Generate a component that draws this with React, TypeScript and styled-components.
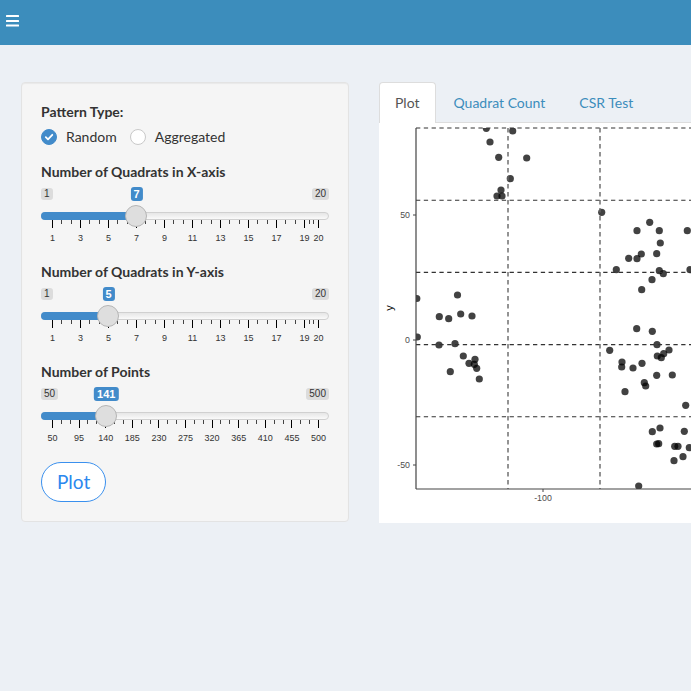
import React from 'react';
import styled, { createGlobalStyle } from 'styled-components';

const GlobalStyle = createGlobalStyle`
  html, body {
    margin: 0;
    padding: 0;
    overflow: hidden;
    background: #ecf0f5;
  }
  body {
    min-height: 100vh;
    font-family: Lato, "Open Sans", sans-serif;
    color: #333;
  }
`;

const Page = styled.div`
  min-height: 100vh;
  background: #ecf0f5;
`;

const HeaderBar = styled.header`
  height: 45px;
  background: #3c8dbc;
  display: flex;
  align-items: flex-start;
  padding: 15px 0 0 6px;
  box-sizing: border-box;
`;

const Content = styled.div`
  display: flex;
  align-items: flex-start;
  gap: 30px;
  width: 100%;
  box-sizing: border-box;
  padding: 37px 0 0 21px;
`;

const Well = styled.div`
  flex: 0 0 328px;
  box-sizing: border-box;
  padding: 19px;
  background: #f5f5f5;
  border: 1px solid #e3e3e3;
  border-radius: 4px;
  box-shadow: inset 0 1px 1px rgba(0, 0, 0, 0.05);
`;

const FormGroup = styled.div`
  margin-bottom: 15px;
`;

const FieldLabel = styled.div<{ $gap?: number }>`
  font-weight: 700;
  font-size: 14px;
  line-height: 20px;
  color: #333;
  margin-bottom: ${p => p.$gap ?? 0}px;
`;

const RadioRow = styled.div`
  display: flex;
  align-items: center;
  height: 20px;
  gap: 13px;
`;

const RadioOption = styled.label`
  display: flex;
  align-items: center;
  gap: 9px;
  font-size: 14px;
  line-height: 20px;
  color: #333;
`;

const RadioDot = styled.span<{ $checked?: boolean }>`
  width: 16px;
  height: 16px;
  box-sizing: border-box;
  border-radius: 50%;
  display: flex;
  align-items: center;
  justify-content: center;
  background: ${p => (p.$checked ? '#428bca' : '#fff')};
  border: 1px solid ${p => (p.$checked ? '#428bca' : '#c9c9c9')};
`;

const SliderBox = styled.div`
  position: relative;
  width: 288px;
  height: 65px;
`;

const EdgeBadge = styled.span<{ $side: 'left' | 'right' }>`
  position: absolute;
  top: 6px;
  ${p => p.$side}: 0;
  font-family: "Liberation Sans", Arial, sans-serif;
  font-size: 10px;
  line-height: 12px;
  padding: 0 3px;
  border-radius: 3px;
  background: rgba(0, 0, 0, 0.1);
  color: #333;
`;

const ValueBadge = styled.span`
  position: absolute;
  top: 5px;
  transform: translateX(-50%);
  font-family: "Liberation Sans", Arial, sans-serif;
  font-weight: 700;
  font-size: 11px;
  line-height: 12px;
  padding: 1px 3px;
  border-radius: 3px;
  background: #428bca;
  color: #fff;
`;

const Track = styled.div`
  position: absolute;
  left: 0;
  right: 0;
  top: 30px;
  height: 8px;
  box-sizing: border-box;
  border: 1px solid #d0d0d0;
  border-radius: 4px;
  background: linear-gradient(#e6e6e6, #fafafa);
`;

const Bar = styled.div`
  position: absolute;
  left: 0;
  top: 30px;
  height: 8px;
  border-radius: 4px 0 0 4px;
  background: #428bca;
`;

const Handle = styled.div`
  position: absolute;
  top: 23px;
  width: 22px;
  height: 22px;
  margin-left: -11px;
  box-sizing: border-box;
  border-radius: 50%;
  background: #dedede;
  border: 1px solid #b5b5b5;
`;

const Tick = styled.span<{ $major?: boolean }>`
  position: absolute;
  top: 38px;
  width: 1px;
  height: ${p => (p.$major ? 8 : 4)}px;
  background: ${p => (p.$major ? '#000' : '#444')};
`;

const TickLabel = styled.span`
  position: absolute;
  top: 50px;
  transform: translateX(-50%);
  font-family: "Liberation Sans", Arial, sans-serif;
  font-size: 9px;
  line-height: 12px;
  color: #333;
  white-space: nowrap;
`;

const PlotButton = styled.button`
  height: 40px;
  padding: 0 15px;
  border: 1px solid #3a90ee;
  border-radius: 20px;
  background: #fff;
  color: #2b88ee;
  font-family: Lato, "Open Sans", sans-serif;
  font-size: 19px;
  line-height: 38px;
`;

const Main = styled.div`
  flex: 1;
  min-width: 0;
  overflow: hidden;
`;

const TabNav = styled.div`
  display: flex;
  border-bottom: 1px solid #ddd;
  width: 686px;
`;

const Tab = styled.div<{ $active?: boolean }>`
  padding: 10px 15px;
  margin-right: 2px;
  margin-bottom: -1px;
  font-size: 14px;
  line-height: 20px;
  border: 1px solid transparent;
  border-bottom: none;
  border-radius: 4px 4px 0 0;
  color: ${p => (p.$active ? '#555' : '#3c8dbc')};
  ${p => p.$active && 'background: #fff; border-color: #ddd;'}
`;

const PlotSvg = styled.svg`
  display: block;
  background: #fff;
`;

const GRID_LEFT = 11;
const GRID_W = 266;

interface SliderProps {
  min: number;
  max: number;
  value: number;
  labels: number[];
}

const Slider = ({ min, max, value, labels }: SliderProps) => {
  const pos = (v: number) => GRID_LEFT + ((v - min) / (max - min)) * GRID_W;
  const minors: number[] = [];
  for (let i = 1; i < labels.length; i++) {
    const a = pos(labels[i - 1]);
    const b = pos(labels[i]);
    minors.push(a + (b - a) / 3, a + ((b - a) * 2) / 3);
  }
  const x = pos(value);
  return (
    <SliderBox>
      <EdgeBadge $side="left">{min}</EdgeBadge>
      <EdgeBadge $side="right">{max}</EdgeBadge>
      <Track />
      <Bar style={{ width: x }} />
      {minors.map((m, i) => (
        <Tick key={'m' + i} style={{ left: Math.round(m) }} />
      ))}
      {labels.map(l => (
        <Tick key={'t' + l} $major style={{ left: Math.round(pos(l)) }} />
      ))}
      {labels.map(l => (
        <TickLabel key={'l' + l} style={{ left: pos(l) + 0.5 }}>
          {l}
        </TickLabel>
      ))}
      <Handle style={{ left: x }} />
      <ValueBadge style={{ left: x + 0.5 }}>{value}</ValueBadge>
    </SliderBox>
  );
};

const odd20 = [1, 3, 5, 7, 9, 11, 13, 15, 17, 19, 20];
const pts50 = [50, 95, 140, 185, 230, 275, 320, 365, 410, 455, 500];

// point positions, page coordinates
const points: [number, number][] = [
  [486.3, 128.3], [512.7, 131], [490, 142], [498.7, 157.3], [526.7, 158],
  [510.3, 178.7], [501, 190], [497, 196], [502, 196],
  [601.7, 212.3], [649.7, 222.3], [637, 230.7], [659.3, 230.7], [687.3, 230.7],
  [660.3, 243], [641.3, 254], [628.7, 258.3], [637, 258.7], [656.7, 253.7],
  [616.3, 269.7], [659.3, 270.7], [663.3, 273.7], [690, 269.7], [652, 279.7],
  [641.7, 289.7],
  [457.5, 295], [416.8, 298.5], [439.3, 316.7], [448.7, 318.7], [460.7, 314],
  [472, 316], [417.3, 337], [439, 345], [455, 343.7], [463.3, 356],
  [469, 363.3], [475, 359.3], [474.3, 364.3], [476.7, 368.3], [450.3, 371.7],
  [479.3, 379],
  [636.7, 328.7], [652.3, 331.3], [657, 344.7], [609.7, 350.3], [669, 350],
  [663.7, 353.7], [657.3, 356], [661.3, 357.7], [622, 362], [621.7, 367],
  [633, 368], [642, 363.3], [656.7, 375.3], [672.3, 375], [644.3, 382.7],
  [645.7, 386], [625, 391.7], [685.7, 405.3], [660, 428], [652.3, 431.7],
  [684.3, 431.3], [656.7, 444], [658.7, 443.7], [674.7, 446.3], [678, 446.3],
  [689.3, 447.7], [683, 456.7], [674, 460.7], [638.7, 486],
];

const OX = 379;
const OY = 123;
const PANEL = { x: 37, y: 5, w: 644, h: 361 };
const vLines = [1, 2, 3, 4, 5, 6].map(i => PANEL.x + i * 92);
const hLines = [0, 1, 2, 3, 4].map(i => PANEL.y + i * 72.2);
const yTicks: [string, number][] = [['50', 92], ['0', 217], ['-50', 342]];

const QuadratPlot = () => (
  <PlotSvg width={686} height={400} viewBox="0 0 686 400">
    <defs>
      <clipPath id="panel">
        <rect x={PANEL.x} y={PANEL.y} width={PANEL.w} height={PANEL.h} />
      </clipPath>
    </defs>
    <g clipPath="url(#panel)">
      {points.map(([x, y], i) => (
        <circle key={i} cx={x - OX} cy={y - OY} r={3.6} fill="#000" fillOpacity={0.74} />
      ))}
    </g>
    {hLines.map((y, i) => (
      <line key={'h' + i} x1={PANEL.x} x2={PANEL.x + PANEL.w} y1={y} y2={y}
        stroke="#333" strokeWidth={1.1} strokeDasharray="4.3 3.5" />
    ))}
    {vLines.map((x, i) => (
      <line key={'v' + i} x1={x} x2={x} y1={PANEL.y} y2={PANEL.y + PANEL.h}
        stroke="#666" strokeWidth={1.4} strokeDasharray="4.5 3.5" />
    ))}
    <line x1={PANEL.x} x2={PANEL.x} y1={PANEL.y} y2={PANEL.y + PANEL.h} stroke="#444" strokeWidth={1.2} />
    <line x1={PANEL.x} x2={PANEL.x + PANEL.w} y1={PANEL.y + PANEL.h} y2={PANEL.y + PANEL.h} stroke="#444" strokeWidth={1.2} />
    {yTicks.map(([t, y]) => (
      <g key={t}>
        <line x1={34} x2={37} y1={y} y2={y} stroke="#444" strokeWidth={1} />
        <text x={31} y={y + 3} textAnchor="end" fontSize={8.8}
          fontFamily='"Liberation Sans", Arial, sans-serif' fill="#4d4d4d">{t}</text>
      </g>
    ))}
    <line x1={164} x2={164} y1={366} y2={369} stroke="#444" strokeWidth={1} />
    <text x={164} y={378} textAnchor="middle" fontSize={8.8}
      fontFamily='"Liberation Sans", Arial, sans-serif' fill="#4d4d4d">-100</text>
    <text x={0} y={0} transform="translate(14 185) rotate(-90)" textAnchor="middle" fontSize={11}
      fontFamily='"Liberation Sans", Arial, sans-serif' fill="#000">y</text>
  </PlotSvg>
);

const Check = () => (
  <svg width="10" height="10" viewBox="0 0 10 10">
    <path d="M1.8 5.2 L4 7.3 L8.3 2.8" fill="none" stroke="#fff" strokeWidth="1.8" strokeLinecap="round" strokeLinejoin="round" />
  </svg>
);

const Hamburger = () => (
  <svg width="13" height="12" viewBox="0 0 13 12">
    <rect x="0" y="0" width="13" height="2" rx="0.5" fill="#fff" />
    <rect x="0" y="5" width="13" height="2" rx="0.5" fill="#fff" />
    <rect x="0" y="9.6" width="13" height="2" rx="0.5" fill="#fff" />
  </svg>
);

export default function App() {
  return (
    <Page>
      <GlobalStyle />
      <HeaderBar>
        <Hamburger />
      </HeaderBar>
      <Content>
        <Well>
          <FormGroup>
            <FieldLabel $gap={5}>Pattern Type:</FieldLabel>
            <RadioRow>
              <RadioOption>
                <RadioDot $checked><Check /></RadioDot>
                Random
              </RadioOption>
              <RadioOption>
                <RadioDot />
                Aggregated
              </RadioOption>
            </RadioRow>
          </FormGroup>
          <FormGroup>
            <FieldLabel>Number of Quadrats in X-axis</FieldLabel>
            <Slider min={1} max={20} value={7} labels={odd20} />
          </FormGroup>
          <FormGroup>
            <FieldLabel>Number of Quadrats in Y-axis</FieldLabel>
            <Slider min={1} max={20} value={5} labels={odd20} />
          </FormGroup>
          <FormGroup>
            <FieldLabel>Number of Points</FieldLabel>
            <Slider min={50} max={500} value={141} labels={pts50} />
          </FormGroup>
          <PlotButton>Plot</PlotButton>
        </Well>
        <Main>
          <TabNav>
            <Tab $active>Plot</Tab>
            <Tab>Quadrat Count</Tab>
            <Tab>CSR Test</Tab>
          </TabNav>
          <QuadratPlot />
        </Main>
      </Content>
    </Page>
  );
}
